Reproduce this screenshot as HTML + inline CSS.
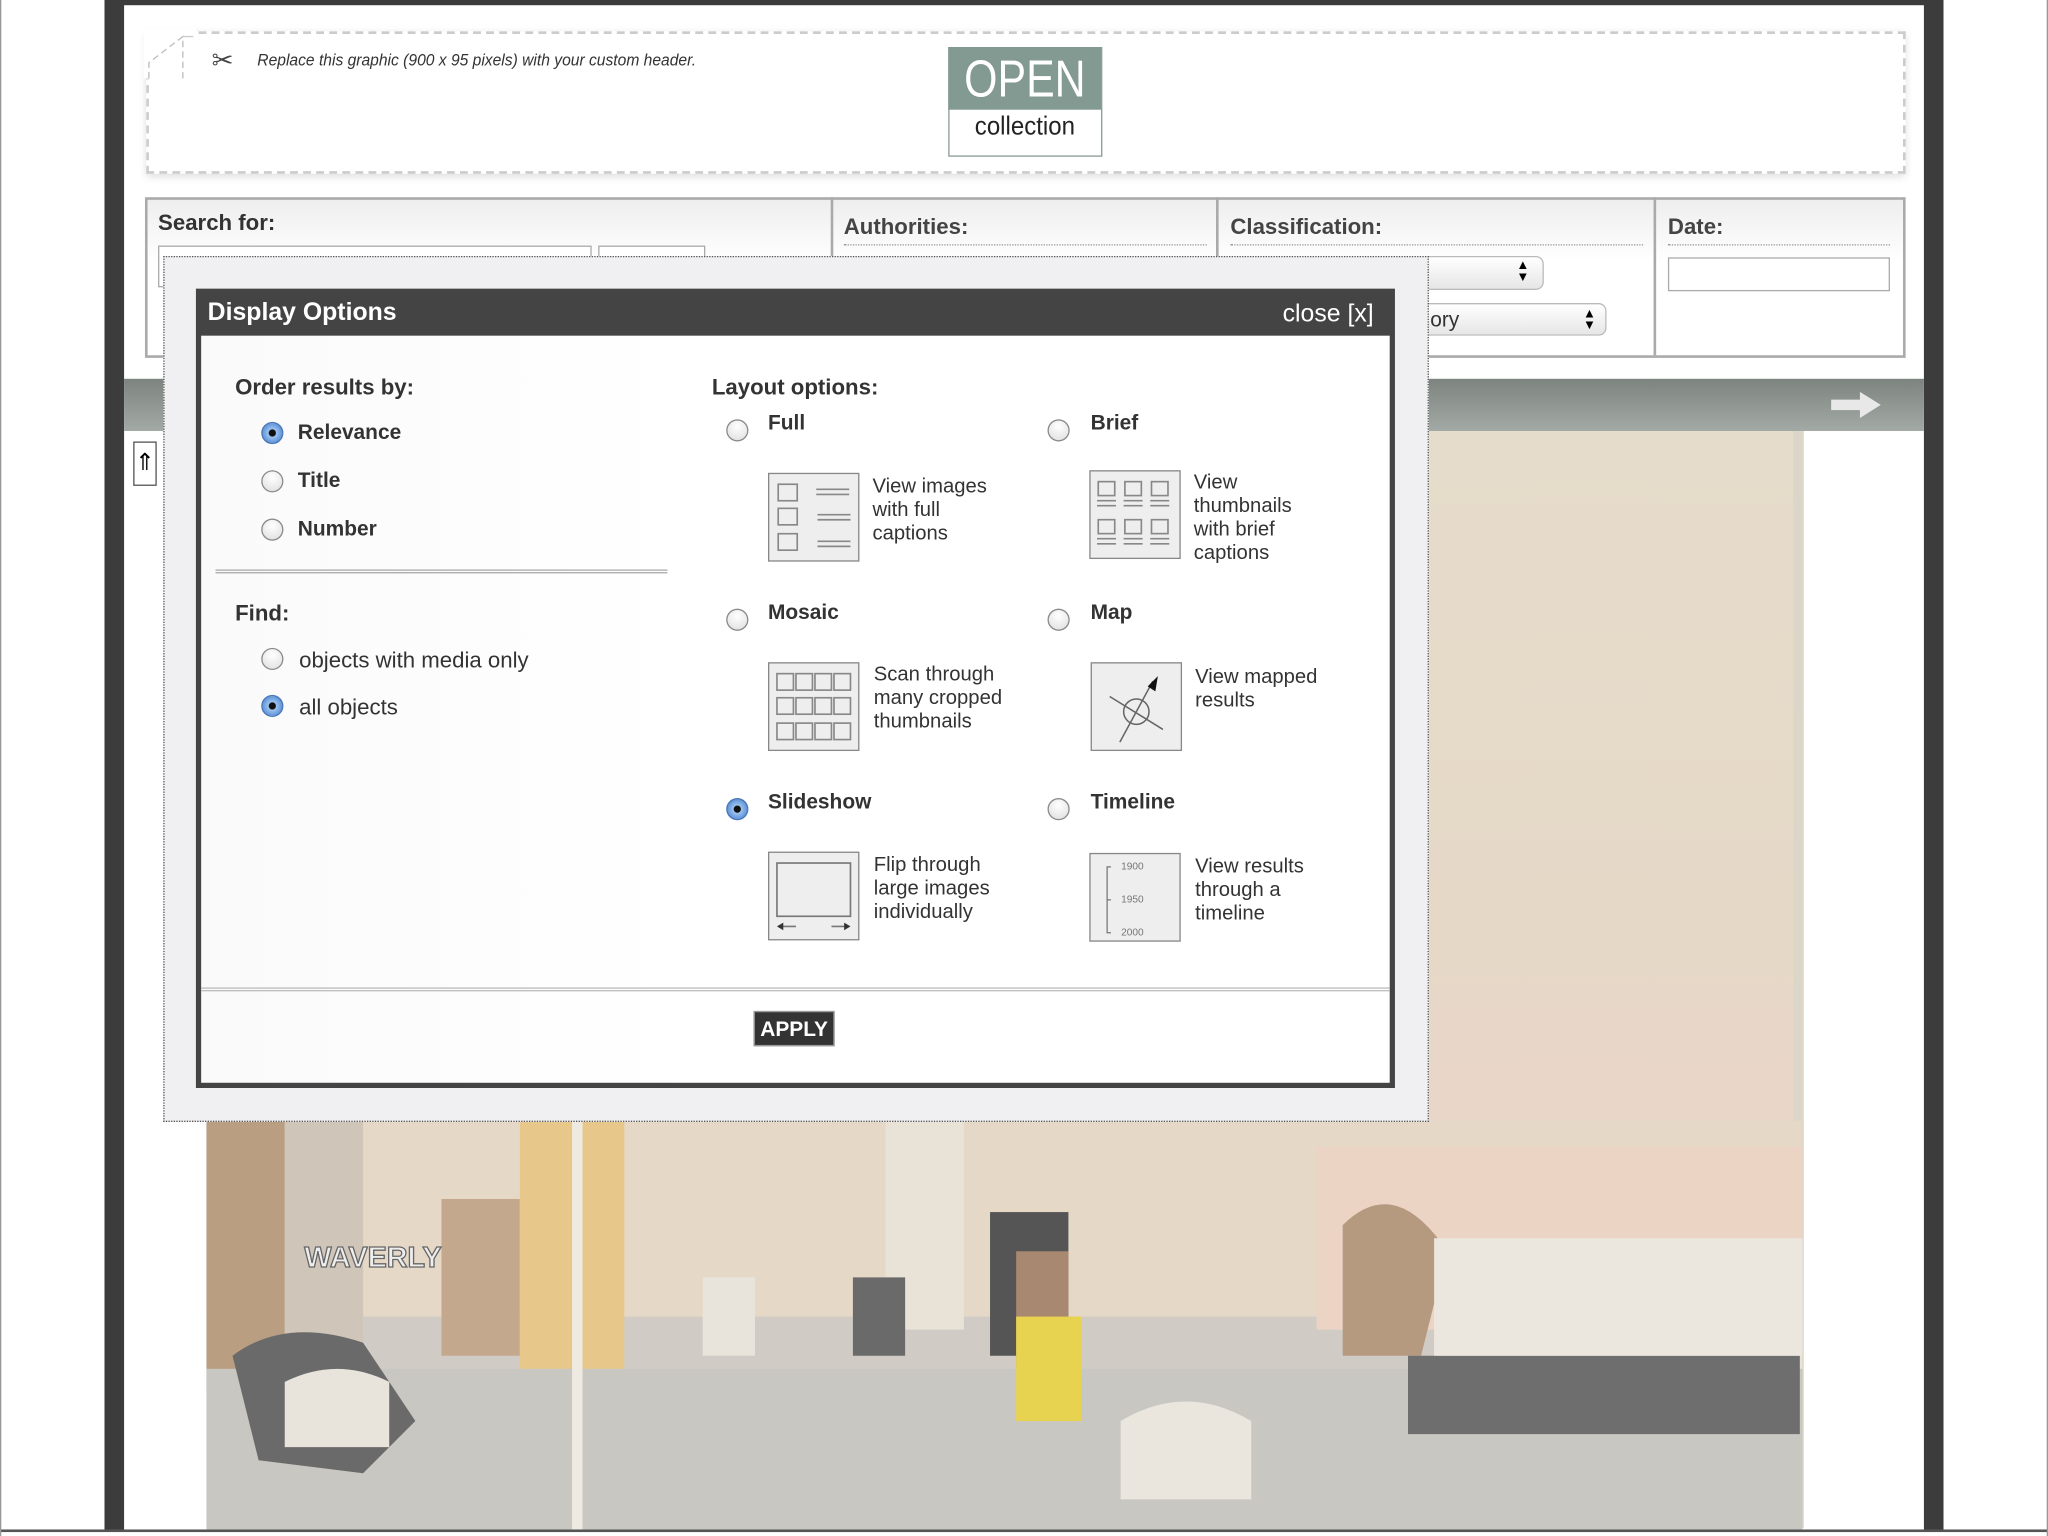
<!DOCTYPE html>
<html><head><meta charset="utf-8"><style>
html,body{margin:0;padding:0;width:2048px;height:1536px;overflow:hidden;background:#fff}
#w{position:absolute;left:0;top:0;width:1568px;height:1176px;transform:scale(1.30612);transform-origin:0 0;font-family:"Liberation Sans","DejaVu Sans",sans-serif;}
.a{position:absolute}
.b{font-weight:bold;color:#333}
.rad{position:absolute;width:17px;height:17px;border-radius:50%;border:1px solid #8a8a8a;background:radial-gradient(circle at 50% 30%,#fff,#ddd);box-sizing:border-box}
.rad.on{border-color:#4a78b8;background:radial-gradient(circle,#111 0 2.5px,#9cc4f0 3px,#5b8fd6 8px)}
.t{position:absolute;font-size:15.5px;color:#333;line-height:18px}
.ic{position:absolute;width:70px;height:68px;border:1.5px solid #888;background:#eee;box-sizing:border-box}
.lab{position:absolute;font-size:16px;font-weight:bold;color:#333}
</style></head><body><div id="w">
<div class="a" style="left:80px;top:0;width:15px;height:1172px;background:#3c3c3c"></div>
<div class="a" style="left:1473px;top:0;width:15px;height:1172px;background:#3c3c3c"></div>
<div class="a" style="left:80px;top:0;width:1408px;height:4px;background:#3c3c3c"></div>
<div class="a" style="left:0;top:1171px;width:1568px;height:2px;background:#555"></div>
<div class="a" style="left:0;top:0;width:1px;height:1176px;background:#999"></div>
<div class="a" style="left:1567px;top:0;width:1px;height:1176px;background:#999"></div>
<div class="a" style="left:112px;top:24px;width:1343px;height:105px;border:2px dashed #ccc;box-shadow:0 2px 6px #ddd;background:#fff"></div>
<div class="a" style="left:110px;top:22px;width:40px;height:38px;background:#fff"></div>
<svg class="a" style="left:112px;top:26px" width="40" height="36"><path d="M2 34 L2 22 L28 2 L28 34" fill="#fff" stroke="#bbb" stroke-dasharray="5 3"/><path d="M28 2 L36 2" stroke="#ccc"/></svg>
<div class="a" style="left:162px;top:34px;font-size:20px;color:#444">✂</div>
<div class="a" style="left:197px;top:38px;font-size:13px;font-style:italic;color:#333;transform:scaleX(0.92);transform-origin:0 0">Replace this graphic (900 x 95 pixels) with your custom header.</div>
<div class="a" style="left:726px;top:36px;width:116px;height:82px;border:1px solid #8a9b94;background:#fff"></div>
<div class="a" style="left:726px;top:36px;width:117px;height:48px;background:#839a92;color:#fff;font-size:40px;text-align:center;line-height:50px"><span style="display:inline-block;transform:scaleX(0.82)">OPEN</span></div>
<div class="a" style="left:726px;top:86px;width:117px;text-align:center;font-size:20px;color:#222"><span style="display:inline-block;transform:scaleX(0.92)">collection</span></div>
<div class="a" style="left:111px;top:151px;width:1344px;height:119px;border:2px solid #aaa;background:linear-gradient(#eee,#fff 40%)"></div>
<div class="a" style="left:636px;top:151px;width:2px;height:121px;background:#aaa"></div>
<div class="a" style="left:931px;top:151px;width:2px;height:121px;background:#aaa"></div>
<div class="a" style="left:1266px;top:151px;width:2px;height:121px;background:#aaa"></div>
<div class="a b" style="left:121px;top:161px;font-size:17px">Search for:</div>
<div class="a b" style="left:646px;top:164px;font-size:17px;color:#444">Authorities:</div>
<div class="a b" style="left:942px;top:164px;font-size:17px;color:#444">Classification:</div>
<div class="a b" style="left:1277px;top:164px;font-size:17px;color:#444">Date:</div>
<div class="a" style="left:646px;top:187px;width:278px;border-top:1px dotted #999"></div>
<div class="a" style="left:942px;top:187px;width:316px;border-top:1px dotted #999"></div>
<div class="a" style="left:1277px;top:187px;width:170px;border-top:1px dotted #999"></div>
<div class="a" style="left:1277px;top:197px;width:168px;height:24px;border:1px solid #aaa;background:#fff"></div>
<div class="a" style="left:121px;top:188px;width:330px;height:30px;border:1px solid #aaa;background:#fff"></div>
<div class="a" style="left:458px;top:188px;width:80px;height:20px;border:1px solid #aaa;background:#fff"></div>
<div class="a" style="left:1080px;top:196px;width:100px;height:24px;border:1px solid #bbb;border-radius:6px;background:linear-gradient(#fff,#e6e6e6)"></div>
<div class="a" style="left:1161px;top:199px;font-size:10px;line-height:9px">▲<br>▼</div>
<div class="a" style="left:1080px;top:232px;width:150px;height:25px;border:1px solid #bbb;border-radius:6px;background:linear-gradient(#fff,#e6e6e6);font-size:16px;line-height:25px;padding-left:14px;box-sizing:border-box;color:#333">ory</div>
<div class="a" style="left:1212px;top:236px;font-size:10px;line-height:9px">▲<br>▼</div>
<div class="a" style="left:95px;top:290px;width:1378px;height:40px;background:linear-gradient(#7d847f,#a3aaa5)"></div>
<svg class="a" style="left:1400px;top:298px" width="42" height="24"><path d="M2 8 H24 V2 L40 12 L24 22 V16 H2Z" fill="#e8e8e8"/></svg>
<div class="a" style="left:102px;top:338px;width:16px;height:32px;border:1px solid #555;background:#fff;font-size:18px;line-height:30px;text-align:center">⇑</div>
<div class="a" style="left:1093px;top:330px;width:287px;height:528px;background:linear-gradient(#e6dccb,#e5d8c7 70%,#ead6c8)"></div>
<div class="a" style="left:1373px;top:330px;width:8px;height:840px;background:#dcd6c8"></div>
<svg class="a" style="left:158px;top:858px" width="1222" height="313">
<rect width="1222" height="313" fill="#d0ccc5"/>
<rect x="0" y="0" width="1222" height="150" fill="#e6d8c6"/>
<rect x="0" y="0" width="60" height="210" fill="#b99e82"/>
<rect x="60" y="0" width="60" height="180" fill="#cfc6b9"/>
<rect x="180" y="60" width="60" height="120" fill="#c4a88e"/>
<rect x="240" y="0" width="80" height="200" fill="#e8c88a"/>
<rect x="520" y="0" width="60" height="160" fill="#e9e2d6"/>
<rect x="600" y="70" width="60" height="110" fill="#555"/>
<rect x="620" y="100" width="40" height="90" fill="#a88870"/>
<rect x="850" y="20" width="372" height="140" fill="#ecd4c4"/>
<rect x="940" y="120" width="282" height="120" fill="#e8e2d9"/>
<path d="M870 80 q40 -40 80 20 l-20 80 l-60 0z" fill="#b59a80"/>
<rect x="0" y="190" width="1222" height="123" fill="#c9c7c2"/>
<path d="M20 180 q40 -30 100 -10 l40 60 l-40 40 l-80 -10z" fill="#6a6a6a"/>
<path d="M60 200 q40 -20 80 0 l0 50 l-80 0z" fill="#e8e4dc"/>
<rect x="620" y="150" width="50" height="80" fill="#e8d350"/>
<path d="M920 180 h300 v60 h-300z" fill="#6e6e6e"/>
<rect x="940" y="90" width="282" height="90" fill="#ebe6de"/>
<path d="M700 230 q50 -30 100 0 v60 h-100z" fill="#eae6de"/>
<rect x="380" y="120" width="40" height="60" fill="#e8e4dc"/>
<rect x="495" y="120" width="40" height="60" fill="#6a6a6a"/>
<rect x="280" y="0" width="8" height="313" fill="#eeeae2"/>
<text x="75" y="112" font-size="22" font-weight="bold" fill="#eee" stroke="#666" font-family="Liberation Sans">WAVERLY</text>
</svg>
<div class="a" style="left:125px;top:196px;width:967px;height:661px;border:1px dotted #555;background:#f0f0f2"></div>
<div class="a" style="left:150px;top:221px;width:918px;height:612px;background:#444"></div>
<div class="a" style="left:154px;top:257px;width:910px;height:572px;background:linear-gradient(90deg,#fafafa,#fff 40%)"></div>
<div class="a" style="left:159px;top:229px;color:#fff;font-weight:bold;font-size:19px">Display Options</div>
<div class="a" style="left:982px;top:230px;color:#fff;font-size:19px">close [x]</div>
<div class="a b" style="left:180px;top:287px;font-size:17px">Order results by:</div>
<div class="rad on" style="left:200px;top:323px"></div><div class="lab" style="left:228px;top:323px">Relevance</div>
<div class="rad" style="left:200px;top:360px"></div><div class="lab" style="left:228px;top:360px">Title</div>
<div class="rad" style="left:200px;top:397px"></div><div class="lab" style="left:228px;top:397px">Number</div>
<div class="a" style="left:165px;top:436px;width:346px;border-top:3px double #aaa"></div>
<div class="a b" style="left:180px;top:460px;font-size:17px">Find:</div>
<div class="rad" style="left:200px;top:496px"></div><div class="a" style="left:229px;top:496px;font-size:17px;color:#333">objects with media only</div>
<div class="rad on" style="left:200px;top:532px"></div><div class="a" style="left:229px;top:532px;font-size:17px;color:#333">all objects</div>
<div class="a b" style="left:545px;top:287px;font-size:17px">Layout options:</div>
<div class="rad" style="left:556px;top:321px"></div><div class="lab" style="left:588px;top:316px">Full</div>
<div class="rad" style="left:802px;top:321px"></div><div class="lab" style="left:835px;top:316px">Brief</div>
<div class="rad" style="left:556px;top:466px"></div><div class="lab" style="left:588px;top:461px">Mosaic</div>
<div class="rad" style="left:802px;top:466px"></div><div class="lab" style="left:835px;top:461px">Map</div>
<div class="rad on" style="left:556px;top:611px"></div><div class="lab" style="left:588px;top:606px">Slideshow</div>
<div class="rad" style="left:802px;top:611px"></div><div class="lab" style="left:835px;top:606px">Timeline</div>
<svg class="ic" style="left:588px;top:362px" viewBox="0 0 70 68"><g fill="none" stroke="#888" stroke-width="1.3"><rect x="7" y="8" width="15" height="13"/><rect x="7" y="27" width="15" height="13"/><rect x="7" y="47" width="15" height="13"/><path d="M37 12h26M37 16h26M38 32h26M38 36h26M38 53h26M38 57h26"/></g></svg>
<div class="t" style="left:668px;top:364px">View images<br>with full<br>captions</div>
<svg class="ic" style="left:834px;top:360px" viewBox="0 0 70 68"><g fill="none" stroke="#888" stroke-width="1.3"><rect x="6" y="8" width="13" height="11"/><rect x="27" y="8" width="13" height="11"/><rect x="48" y="8" width="13" height="11"/><rect x="6" y="38" width="13" height="11"/><rect x="27" y="38" width="13" height="11"/><rect x="48" y="38" width="13" height="11"/><path d="M5 23h15M5 27h15M26 23h15M26 27h15M47 23h15M47 27h15M5 53h15M5 57h15M26 53h15M26 57h15M47 53h15M47 57h15"/></g></svg>
<div class="t" style="left:914px;top:361px">View<br>thumbnails<br>with brief<br>captions</div>
<svg class="ic" style="left:588px;top:507px" viewBox="0 0 70 68"><g fill="none" stroke="#888" stroke-width="1.3"><rect x="6" y="8" width="13" height="13"/><rect x="21" y="8" width="13" height="13"/><rect x="36" y="8" width="13" height="13"/><rect x="51" y="8" width="13" height="13"/><rect x="6" y="27" width="13" height="13"/><rect x="21" y="27" width="13" height="13"/><rect x="36" y="27" width="13" height="13"/><rect x="51" y="27" width="13" height="13"/><rect x="6" y="47" width="13" height="13"/><rect x="21" y="47" width="13" height="13"/><rect x="36" y="47" width="13" height="13"/><rect x="51" y="47" width="13" height="13"/></g></svg>
<div class="t" style="left:669px;top:508px">Scan through<br>many cropped<br>thumbnails</div>
<svg class="ic" style="left:835px;top:507px" viewBox="0 0 70 68"><g fill="none" stroke="#666" stroke-width="1.2"><circle cx="35" cy="38" r="10"/><path d="M14 26 L56 52M22 62 L48 14"/></g><path d="M44 18 L52 10 L50 22Z" fill="#111"/></svg>
<div class="t" style="left:915px;top:510px">View mapped<br>results</div>
<svg class="ic" style="left:588px;top:652px" viewBox="0 0 70 68"><g fill="none" stroke="#777" stroke-width="1.3"><rect x="6" y="8" width="58" height="42"/><path d="M7 58h14M49 58h14"/></g><path d="M6 58l5-3v6zM64 58l-5-3v6z" fill="#333"/></svg>
<div class="t" style="left:669px;top:654px">Flip through<br>large images<br>individually</div>
<svg class="ic" style="left:834px;top:653px" viewBox="0 0 70 68"><path d="M16 10h-3v52h3M13 36h3" fill="none" stroke="#777"/><g font-size="8" fill="#777" font-family="Liberation Sans"><text x="24" y="12">1900</text><text x="24" y="38">1950</text><text x="24" y="64">2000</text></g></svg>
<div class="t" style="left:915px;top:655px">View results<br>through a<br>timeline</div>
<div class="a" style="left:154px;top:756px;width:910px;border-top:3px double #bbb"></div>
<div class="a" style="left:577px;top:774px;width:62px;height:27px;background:#333;color:#fff;font-weight:bold;font-size:16px;line-height:27px;text-align:center;border:1px solid #999;box-sizing:border-box">APPLY</div>
</div></body></html>
